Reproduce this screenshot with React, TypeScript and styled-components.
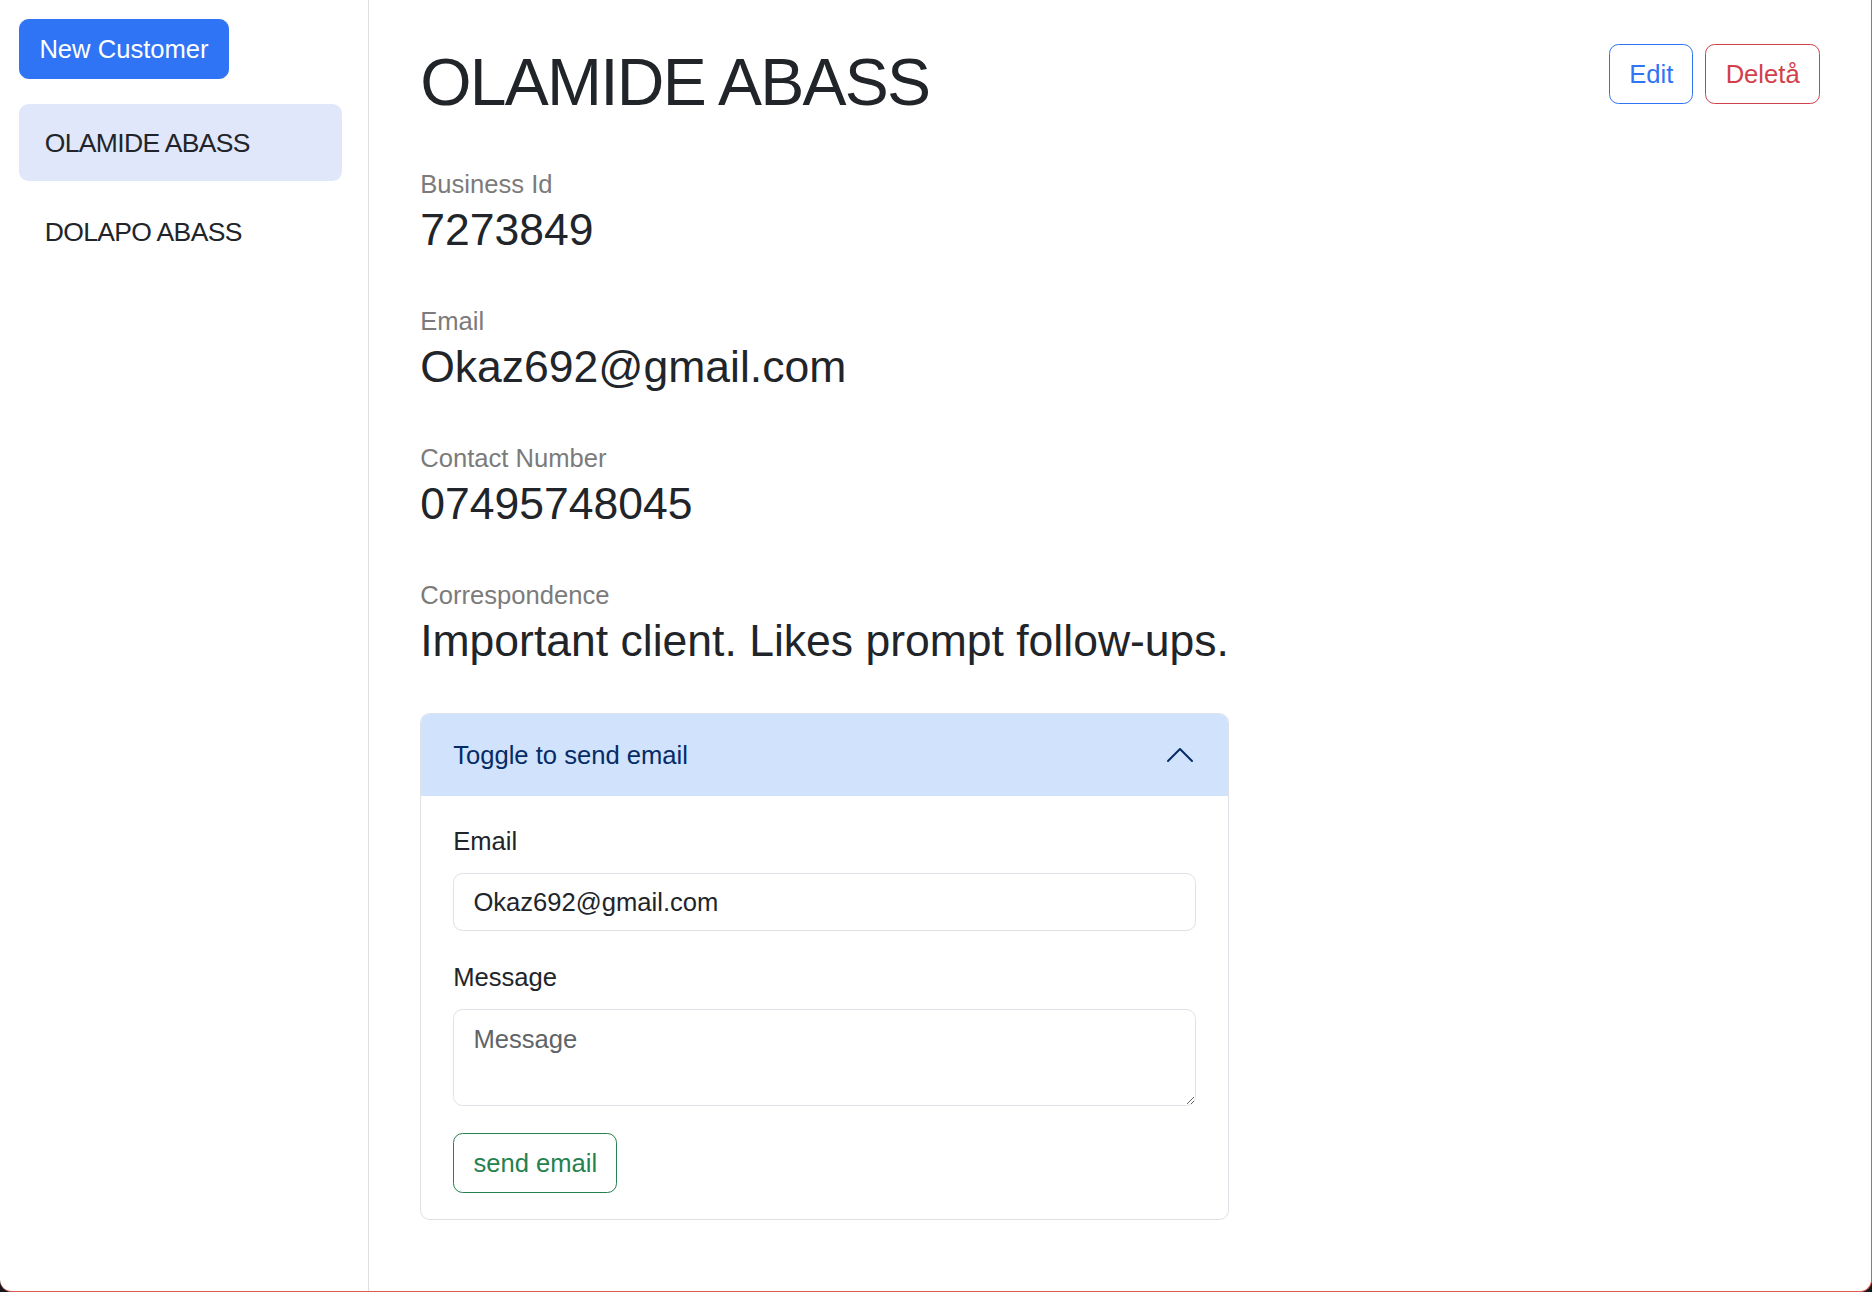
import React from "react";
import styled, { createGlobalStyle } from "styled-components";

const GlobalStyle = createGlobalStyle`
  *, *::before, *::after { box-sizing: border-box; }
  html, body { margin: 0; padding: 0; background: #16181b; }
  body {
    font-family: "Liberation Sans", Arial, Helvetica, sans-serif;
    color: #212529;
  }
`;

const Window = styled.div`
  width: 1872px;
  height: 1292px;
  display: flex;
  background: #ffffff;
  border-right: 1px solid #de5b4f;
  border-bottom: 1px solid #de5b4f;
  border-bottom-left-radius: 12px;
  border-bottom-right-radius: 12px;
  overflow: hidden;
`;

const Sidebar = styled.aside`
  width: 369px;
  flex-shrink: 0;
  border-right: 1px solid #dedede;
  padding: 19.2px 26px 19.2px 19.2px;
  display: flex;
  flex-direction: column;
  align-items: flex-start;
`;

const PrimaryButton = styled.button`
  font-family: inherit;
  font-size: 25.6px;
  line-height: 38.4px;
  padding: 9.6px 19.2px;
  border: 1px solid #2f74f5;
  background: #2f74f5;
  color: #ffffff;
  border-radius: 9.6px;
  cursor: pointer;
`;

const CustomerList = styled.ul`
  list-style: none;
  margin: 25.6px 0 0;
  padding: 0;
  width: 100%;
  display: flex;
  flex-direction: column;
  gap: 12.8px;
`;

const CustomerItem = styled.li<{ $active?: boolean }>`
  padding: 19.2px 25.6px;
  font-size: 26.5px;
  line-height: 38.4px;
  letter-spacing: -0.65px;
  border-radius: 9.6px;
  color: #212529;
  background: ${(p) => (p.$active ? "#e1e7fb" : "transparent")};
`;

const Main = styled.main`
  flex: 1;
  min-width: 0;
  padding: 44px 51.2px;
`;

const Header = styled.header`
  display: flex;
  justify-content: space-between;
  align-items: flex-start;
  margin-bottom: 44px;
`;

const Title = styled.h1`
  margin: 0;
  font-size: 66px;
  line-height: 77px;
  font-weight: 400;
  letter-spacing: -1.75px;
  color: #212529;
`;

const Actions = styled.div`
  display: flex;
  gap: 12px;
`;

const OutlineButton = styled.button<{ $tone: string }>`
  font-family: inherit;
  font-size: 25.6px;
  line-height: 38.4px;
  padding: 9.6px 19.2px;
  background: #ffffff;
  color: ${(p) => p.$tone};
  border: 1px solid ${(p) => p.$tone};
  border-radius: 9.6px;
  cursor: pointer;
`;

const Details = styled.section`
  display: flex;
  flex-direction: column;
  width: fit-content;
`;

const Field = styled.div`
  margin-bottom: 44.8px;
`;

const FieldLabel = styled.div`
  font-size: 25.6px;
  line-height: 38.4px;
  color: #7b7b7b;
`;

const FieldValue = styled.div`
  font-size: 44.5px;
  line-height: 53.76px;
  color: #212529;
`;

const Card = styled.div`
  border: 1px solid #dee2e6;
  border-radius: 9.6px;
  overflow: hidden;
`;

const CardHeader = styled.div`
  display: flex;
  align-items: center;
  justify-content: space-between;
  padding: 22px 32px;
  background: #d0e2fc;
  color: #052c65;
  font-size: 25.6px;
  line-height: 38.4px;
`;

const CardBody = styled.div`
  padding: 25.6px 32px 26px;
`;

const FormGroup = styled.div`
  margin-bottom: 27px;
`;

const FormLabel = styled.label`
  display: block;
  font-size: 25.6px;
  line-height: 38.4px;
  margin-bottom: 12.8px;
  color: #212529;
`;

const TextInput = styled.input`
  display: block;
  width: 100%;
  height: 58px;
  padding: 0 19.2px;
  font-family: inherit;
  font-size: 25.6px;
  color: #212529;
  border: 1px solid #dee2e6;
  border-radius: 9.6px;
  background: #ffffff;
  outline: none;
`;

const TextArea = styled.textarea`
  display: block;
  width: 100%;
  height: 97px;
  padding: 9.6px 19.2px;
  font-family: inherit;
  font-size: 25.6px;
  line-height: 38.4px;
  color: #212529;
  border: 1px solid #dee2e6;
  border-radius: 9.6px;
  background: #ffffff;
  outline: none;
  resize: vertical;
  &::placeholder { color: #5f6468; }
`;

const Chevron = () => (
  <svg width="32" height="32" viewBox="0 0 16 16" fill="none" stroke="#052c65" strokeLinecap="round" strokeLinejoin="round">
    <path d="M2 11L8 5L14 11" />
  </svg>
);

const fields = [
  { label: "Business Id", value: "7273849" },
  { label: "Email", value: "Okaz692@gmail.com" },
  { label: "Contact Number", value: "07495748045" },
  { label: "Correspondence", value: "Important client. Likes prompt follow-ups." },
];

export default function App() {
  return (
    <>
      <GlobalStyle />
      <Window>
        <Sidebar>
          <PrimaryButton>New Customer</PrimaryButton>
          <CustomerList>
            <CustomerItem $active>OLAMIDE ABASS</CustomerItem>
            <CustomerItem>DOLAPO ABASS</CustomerItem>
          </CustomerList>
        </Sidebar>
        <Main>
          <Header>
            <Title>OLAMIDE ABASS</Title>
            <Actions>
              <OutlineButton $tone="#2f74f5">Edit</OutlineButton>
              <OutlineButton $tone="#d2404b">Deletå</OutlineButton>
            </Actions>
          </Header>
          <Details>
            {fields.map((f) => (
              <Field key={f.label}>
                <FieldLabel>{f.label}</FieldLabel>
                <FieldValue>{f.value}</FieldValue>
              </Field>
            ))}
            <Card>
              <CardHeader>
                <span>Toggle to send email</span>
                <Chevron />
              </CardHeader>
              <CardBody>
                <FormGroup>
                  <FormLabel>Email</FormLabel>
                  <TextInput readOnly defaultValue="Okaz692@gmail.com" />
                </FormGroup>
                <FormGroup>
                  <FormLabel>Message</FormLabel>
                  <TextArea placeholder="Message" />
                </FormGroup>
                <OutlineButton $tone="#25814f">send email</OutlineButton>
              </CardBody>
            </Card>
          </Details>
        </Main>
      </Window>
    </>
  );
}
